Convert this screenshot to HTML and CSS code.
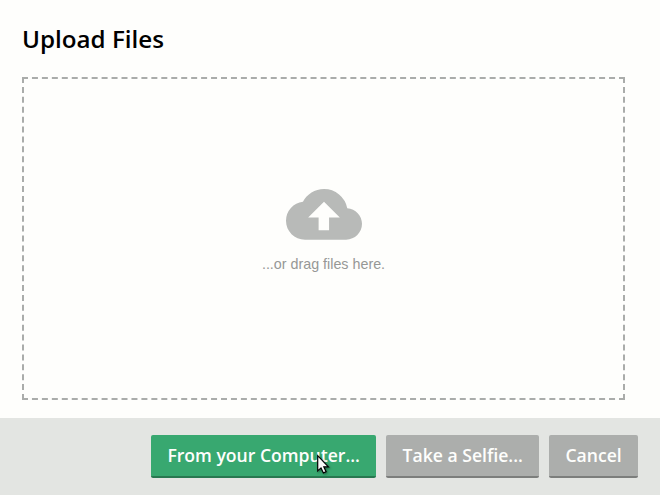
FILE: index.html
```html
<!DOCTYPE html>
<html lang="en">
<head>
<meta charset="utf-8">
<title>Upload Files</title>
<link rel="stylesheet" href="styles.css">
</head>
<body>
<main class="dialog">
  <h1 class="title">Upload Files</h1>
  <section class="dropzone">
    <svg class="cloud" viewBox="0 0 24 16" aria-hidden="true"><path d="M19.35 6.04A7.49 7.49 0 0 0 12 0C9.11 0 6.6 1.64 5.35 4.04A5.994 5.994 0 0 0 0 10c0 3.31 2.69 6 6 6h13c2.76 0 5-2.24 5-5 0-2.64-2.05-4.78-4.65-4.96zM13.6 9v4h-3.3V9H7l5-5 5 5h-3.4z"/></svg>
    <p class="hint">...or drag files here.</p>
  </section>
  <footer class="actions">
    <button class="button primary">From your Computer...</button>
    <button class="button">Take a Selfie...</button>
    <button class="button">Cancel</button>
  </footer>
</main>
<svg class="cursor" viewBox="0 0 13 20" aria-hidden="true"><path d="M.7 1.7v15.2l3.3-3 2.4 5 2.7-1.2-2.3-4.9h4.6z"/></svg>
</body>
</html>
```
FILE: styles.css
```css
* { box-sizing: border-box; }
body { margin: 0; background: #fefefc; }
.dialog { width: 660px; height: 495px; display: flex; flex-direction: column; }
.title { margin: 22px 22px 21px; font: 600 24.2px/34px "Open Sans", sans-serif; color: #000; }
.dropzone { width: 603px; height: 323px; margin-left: 22px; border: 2px dashed #aaacaa; display: flex; flex-direction: column; align-items: center; padding-top: 110px; }
.cloud { width: 76px; height: 50.7px; fill: #b8bab8; }
.hint { margin: 14px 0 0; font: 14.3px/20px "Liberation Sans", sans-serif; color: #969896; }
.actions { margin-top: 18px; height: 77px; padding: 17px 22px 0 0; display: flex; justify-content: flex-end; gap: 10px; background: #e3e5e2; }
.button { height: 43px; padding: 0 16.3px; border: 0; border-bottom: 2px solid #7c7e7c; border-radius: 2px; background: #acaeac; color: #fefefc; font: 600 17.6px/41px "Open Sans", sans-serif; white-space: nowrap; }
.primary { background: #38a870; border-bottom-color: #287850; }
.cursor { position: absolute; left: 317px; top: 454px; width: 13px; height: 20px; fill: #f8f8f8; stroke: #000; stroke-width: 1.2; overflow: visible; filter: drop-shadow(1px 1px 1px rgba(0, 0, 0, .4)); }
```
